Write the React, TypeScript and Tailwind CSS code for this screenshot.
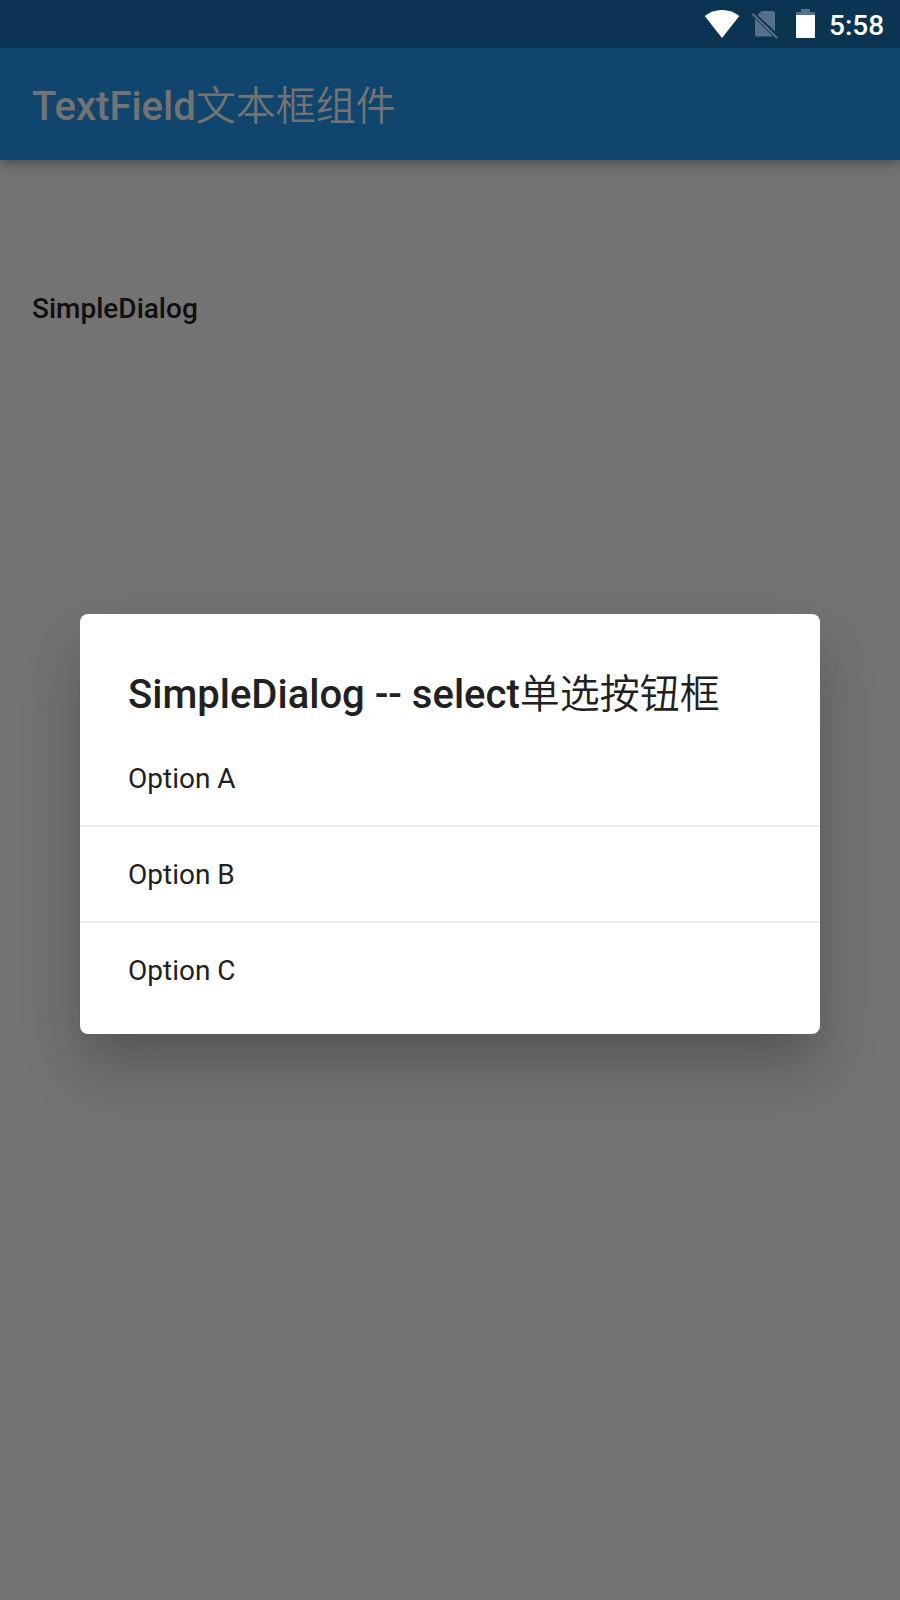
const options = ["Option A", "Option B", "Option C"];

function StatusBar() {
  return (
    <div className="relative h-12 bg-[#0b3352] text-white">
      <svg className="block h-12 w-full" viewBox="0 0 900 48" fill="white">
        <path d="M704.7 16Q712 10 722 10T739.3 16L722 38Z" />
        <g fill="#54708a">
          <path d="M761.5 11H773Q775 11 775 13V31.5L757.5 15Z" />
          <path d="M755 18.5L773 36.5H757Q755 36.5 755 34.5Z" />
          <path d="M753.2 13L778 37.2L776.4 38.8L751.8 14.5Z" />
        </g>
        <path d="M801 9H810V12H815V15H796V12H801Z" fill="#54708a" />
        <path d="M796 15H815V38H796Z" />
      </svg>
      <span className="absolute left-[829px] top-[10px] text-[28px] font-medium leading-8">5:58</span>
    </div>
  );
}

export default function App() {
  return (
    <div className="relative h-[1600px] w-[900px] overflow-hidden bg-[#737373] font-['Roboto','Noto_Sans_CJK_SC',sans-serif] antialiased">
      <StatusBar />
      <header className="flex h-28 items-center bg-[#10456e] pl-8 pt-1.5 text-[40px] font-medium text-[#737373] shadow-[0_4px_8px_-2px_rgba(0,0,0,0.18),0_8px_10px_rgba(0,0,0,0.08),0_2px_16px_rgba(0,0,0,0.1)]">
        <h1>TextField<span className="font-[350]">文本框组件</span></h1>
      </header>
      <p className="pl-8 pt-[133px] text-[28px] font-medium leading-8 text-[#0f0f0f]">SimpleDialog</p>
      <section className="absolute left-20 top-[614px] h-[420px] w-[740px] rounded-lg bg-white pt-[49px] text-[#212121] shadow-[0_22px_30px_-14px_rgba(0,0,0,0.08),0_40px_64px_rgba(0,0,0,0.14),0_24px_60px_rgba(0,0,0,0.08)]">
        <h2 className="pl-12 text-[40px] font-medium leading-[68px]">
          <span className="relative -top-0.5">SimpleDialog -- select<span className="font-[350]">单选按钮框</span></span>
        </h2>
        <div className="divide-y-2 divide-[#eeeeee]">
          {options.map((option) => (
            <button key={option} className="block h-24 w-full pl-12 pt-0.5 text-left text-[28px] last:pt-0">{option}</button>
          ))}
        </div>
      </section>
    </div>
  );
}
